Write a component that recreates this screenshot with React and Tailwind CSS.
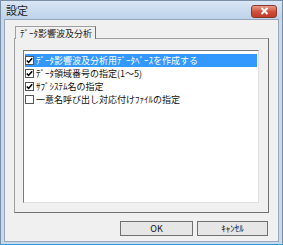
export default function App() {
  const font = { fontFamily: '"Noto Sans CJK JP", "Noto Sans", sans-serif' };
  const rows = [
    { t: "ﾃﾞｰﾀ影響波及分析用ﾃﾞｰﾀﾍﾞｰｽを作成する", c: true, sel: true },
    { t: "ﾃﾞｰﾀ領域番号の指定(1～5)", c: true },
    { t: "ｻﾌﾞｼｽﾃﾑ名の指定", c: true },
    { t: "一意名呼び出し対応付けﾌｧｲﾙの指定", c: false },
  ];
  return (
    <div className="w-[283px] h-[245px] bg-[#c6d9ee] flex flex-col border border-[#7a8ea6] border-b-[#3a9ad0] overflow-hidden" style={font}>
      <div className="h-[18px] flex items-center justify-between pl-[5px] pr-[5px] bg-gradient-to-b from-[#d9e6f4] to-[#bcd2ea]">
        <span className="text-[11px] text-[#1e1e1e] leading-none">設定</span>
        <div className="w-[26px] h-[13px] mt-[2px] rounded-[3px] border border-[#8a3a2c] bg-gradient-to-b from-[#e99a8a] via-[#d0513c] to-[#c33b26] flex items-center justify-center">
          <svg width="9" height="8" viewBox="0 0 9 8">
            <path d="M1.5 1 L7.5 7 M7.5 1 L1.5 7" stroke="#fff" strokeWidth="2" />
          </svg>
        </div>
      </div>
      <div className="flex-1 mx-[3px] mb-[2px] bg-[#f0f0f0] border border-[#98a8ba] flex flex-col pt-[6px] px-[9px]">
        <div className="flex">
          <div className="h-[13px] pl-[4px] pr-[3px] bg-[#f0f0f0] border-t border-l border-r border-[#a0a0a0] border-r-[#707070] text-[9px] leading-[13px] text-[#222] -mb-px relative z-10 ml-px">
            ﾃﾞｰﾀ影響波及分析
          </div>
        </div>
        <div className="h-[175px] border border-[#a0a0a0] border-r-[#707070] border-b-[#707070] pt-[11px] pl-[8px] pr-[9px] pb-[9px] flex">
          <div className="flex-1 bg-white border border-[#7a7a7a] border-r-[#e0e0e0] border-b-[#e0e0e0] pt-[3px] pl-[1px] pr-[1px] flex flex-col">
            {rows.map((r, i) => (
              <div key={i} className={`h-[13px] flex items-center gap-[2px] ${r.sel ? "bg-[#3399ff] text-white" : "text-[#111]"}`}>
                <div className="w-[9px] h-[9px] bg-white border border-[#555] flex items-center justify-center shrink-0">
                  {r.c && (
                    <svg width="7" height="7" viewBox="0 0 7 7">
                      <path d="M0.8 3.5 L2.6 5.4 L6.2 1.2" stroke="#000" strokeWidth="1.6" fill="none" />
                    </svg>
                  )}
                </div>
                <span className="text-[9px] leading-none whitespace-nowrap">{r.t}</span>
              </div>
            ))}
          </div>
        </div>
        <div className="flex justify-end gap-[4px] mt-[8px] pr-px">
          <button className="w-[73px] h-[15px] bg-[#e6e6e6] border border-[#707070] text-[9px] leading-none text-[#111]">OK</button>
          <button className="w-[71px] h-[15px] bg-[#e6e6e6] border border-[#707070] text-[9px] leading-none text-[#111]">ｷｬﾝｾﾙ</button>
        </div>
      </div>
    </div>
  );
}
